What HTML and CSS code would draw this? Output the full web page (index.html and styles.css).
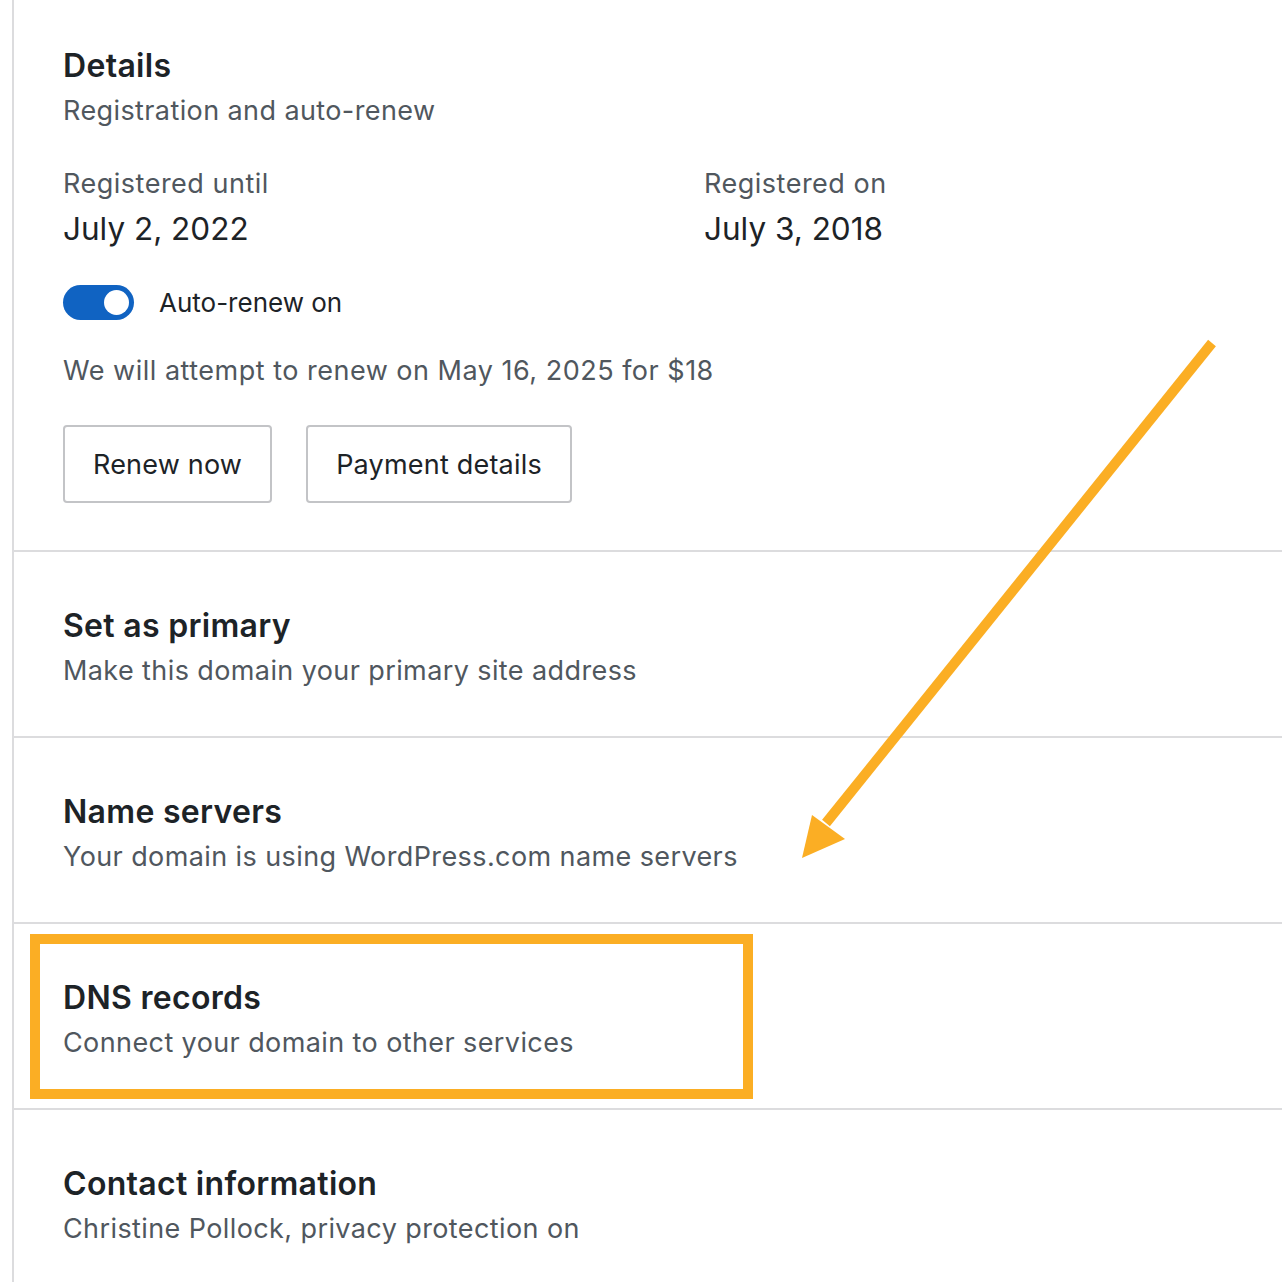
FILE: index.html
```html
<!DOCTYPE html>
<html lang="en">
<head>
    <meta charset="UTF-8">
    <meta name="viewport" content="width=device-width, initial-scale=1.0">
    <title>Domain settings</title>
    <link rel="stylesheet" href="styles.css">
</head>
<body>
    <div class="card">
        <section class="row details">
            <h2>Details</h2>
            <p class="sub">Registration and auto-renew</p>

            <div class="dates">
                <div>
                    <div class="label">Registered until</div>
                    <div class="value">July 2, 2022</div>
                </div>
                <div>
                    <div class="label">Registered on</div>
                    <div class="value">July 3, 2018</div>
                </div>
            </div>

            <div class="toggle-row">
                <span class="toggle"><span class="knob"></span></span>
                <span class="toggle-label">Auto-renew on</span>
            </div>

            <p class="notice">We will attempt to renew on May 16, 2025 for $18</p>

            <div class="buttons">
                <button>Renew now</button>
                <button>Payment details</button>
            </div>
        </section>

        <section class="row">
            <h2>Set as primary</h2>
            <p class="sub">Make this domain your primary site address</p>
        </section>

        <section class="row">
            <h2>Name servers</h2>
            <p class="sub">Your domain is using WordPress.com name servers</p>
        </section>

        <section class="row highlighted">
            <div class="highlight"></div>
            <h2>DNS records</h2>
            <p class="sub">Connect your domain to other services</p>
        </section>

        <section class="row last">
            <h2>Contact information</h2>
            <p class="sub">Christine Pollock, privacy protection on</p>
        </section>
    </div>

    <!-- annotation arrow -->
    <svg class="arrow" width="1282" height="1282" viewBox="0 0 1282 1282">
        <line x1="1212" y1="343" x2="826" y2="823" stroke="#fbae24" stroke-width="10"/>
        <polygon points="802,858 812,815 845,839" fill="#fbae24"/>
    </svg>
</body>
</html>
```

FILE: styles.css
```css
body {
    margin: 0;
    font-family: Inter, 'Noto Sans', sans-serif;
    background-color: #ffffff;
    color: #1d2327;
}

.card {
    margin-left: 12px;
    border-left: 2px solid #dcdcde;
    min-height: 100vh;
}

.row {
    position: relative;
    padding: 52px 49px 45px;
    border-bottom: 2px solid #dcdcde;
}

.row.details {
    padding-top: 44px;
    padding-bottom: 47px;
}

.row.last {
    border-bottom: none;
}

h2 {
    margin: 0;
    font-size: 32px;
    line-height: 44px;
    font-weight: 600;
    letter-spacing: 0.3px;
    color: #1d2327;
}

.sub {
    margin: 3px 0 0;
    font-size: 27px;
    line-height: 40px;
    letter-spacing: 0.4px;
    color: #50575e;
}

.dates {
    display: grid;
    grid-template-columns: 641px 1fr;
    margin-top: 33px;
}

.label {
    font-size: 27px;
    line-height: 40px;
    letter-spacing: 0.5px;
    color: #50575e;
}

.value {
    margin-top: 3px;
    font-size: 31.5px;
    line-height: 44px;
    color: #1d2327;
}

.toggle-row {
    display: flex;
    align-items: center;
    gap: 25px;
    margin-top: 34px;
    height: 35px;
}

.toggle {
    display: flex;
    align-items: center;
    justify-content: flex-end;
    width: 71px;
    height: 35px;
    padding: 0 5px;
    box-sizing: border-box;
    border-radius: 18px;
    background-color: #1063c2;
}

.knob {
    width: 25px;
    height: 25px;
    border-radius: 50%;
    background-color: #ffffff;
}

.toggle-label {
    font-size: 26px;
    line-height: 40px;
    color: #1d2327;
}

.notice {
    margin: 31px 0 0;
    font-size: 27px;
    line-height: 40px;
    letter-spacing: 0.5px;
    color: #50575e;
}

.buttons {
    display: flex;
    gap: 34px;
    margin-top: 34px;
}

button {
    height: 78px;
    padding: 0 28px;
    font-family: inherit;
    font-size: 27px;
    letter-spacing: 0.2px;
    color: #1d2327;
    background-color: #ffffff;
    border: 2px solid #c3c4c7;
    border-radius: 4px;
}

.highlight {
    position: absolute;
    left: 16px;
    top: 10px;
    width: 723px;
    height: 165px;
    box-sizing: border-box;
    border: 10px solid #fbae24;
}

.arrow {
    position: absolute;
    left: 0;
    top: 0;
    pointer-events: none;
}
```
